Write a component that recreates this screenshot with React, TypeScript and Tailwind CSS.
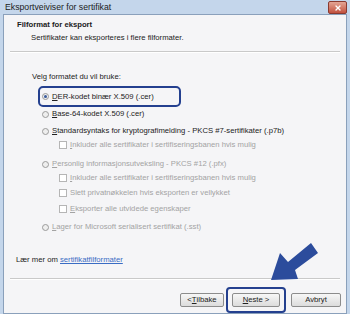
import { X } from 'lucide-react'

const font = { fontFamily: '"Liberation Sans", Arial, sans-serif' }

type OptProps = {
  label: string
  first: string
  disabled?: boolean
  checked?: boolean
}

const Radio = ({ label, first, disabled, checked }: OptProps) => (
  <div className={`flex h-[14px] items-center gap-[3px] ${disabled ? 'text-[#a3a3a3]' : 'text-[#222]'}`}>
    <span className="flex h-[7px] w-[7px] items-center justify-center rounded-full border border-[#9a9a9a] bg-[#eeeeee]">
      {checked && <span className="h-[3px] w-[3px] rounded-full bg-[#3a5a9a]" />}
    </span>
    <span>
      <span className="underline">{first}</span>
      {label}
    </span>
  </div>
)

const Check = ({ label, first }: OptProps) => (
  <div className="flex h-[14px] items-center gap-[3px] pl-[17px] text-[#a3a3a3]">
    <span className="h-[8px] w-[8px] border border-[#b5b5b5] bg-white" />
    <span>
      <span className="underline">{first}</span>
      {label}
    </span>
  </div>
)

const Btn = ({ children, w }: { children: React.ReactNode; w: string }) => (
  <div className={`flex h-[14px] ${w} items-center justify-center rounded-[2px] border border-[#8c8c8c] bg-gradient-to-b from-[#f7f7f7] to-[#dcdcdc] text-[#222]`}>
    {children}
  </div>
)

const App = () => {
  return (
    <div
      className="relative flex h-[314px] w-[350px] flex-col overflow-hidden bg-[#c4d6eb] text-[7.7px] leading-none"
      style={font}
    >
      {/* title bar */}
      <div className="flex h-[17px] items-center justify-between pl-[5px] pr-[3px]">
        <span className="text-[8.7px] text-[#1b1b1b]">Eksportveiviser for sertifikat</span>
        <span className="mt-[1px] flex h-[13px] w-[19px] items-center justify-center rounded-[2px] border border-[#8a3a30] bg-gradient-to-b from-[#e3a595] to-[#c2503e]">
          <X className="h-[8px] w-[8px] text-white" strokeWidth={4} />
        </span>
      </div>

      {/* body */}
      <div className="mx-[3px] mb-[3px] flex flex-1 flex-col border border-[#8aa0bb] bg-[#f5f5f7]">
        <div className="h-[36px] pl-[13px] pt-[6px]">
          <div className="font-bold text-[#1b1b1b]">Filformat for eksport</div>
          <div className="mt-[5px] pl-[14px] text-[#222]">Sertifikater kan eksporteres i flere filformater.</div>
        </div>
        <div className="mx-[6px] border-t border-[#c9c9c9] border-b-white border-b" />

        <div className="pl-[28px] pt-[17px] text-[#222]">
          <div className="flex h-[14px] items-center">Velg formatet du vil bruke:</div>
          <div className="mt-[2px] pl-[10px]">
            <div className="-ml-[4px] flex h-[21px] w-[143px] items-center rounded-[5px] border-2 border-[#24408f] pl-[2px]">
              <Radio first="D" label="ER-kodet binær X.509 (.cer)" checked />
            </div>
            <div className="mt-[0px]">
              <Radio first="B" label="ase-64-kodet X.509 (.cer)" />
            </div>
            <div className="mt-[3px]">
              <Radio first="S" label="tandardsyntaks for kryptografimelding - PKCS #7-sertifikater (.p7b)" />
            </div>
            <Check first="I" label="nkluder alle sertifikater i sertifiseringsbanen hvis mulig" />
            <div className="mt-[5px]">
              <Radio first="P" label="ersonlig informasjonsutveksling - PKCS #12 (.pfx)" disabled />
            </div>
            <Check first="I" label="nkluder alle sertifikater i sertifiseringsbanen hvis mulig" />
            <div className="mt-[1px]">
              <Check first="" label="Slett privatnøkkelen hvis eksporten er vellykket" />
            </div>
            <div className="mt-[2px]">
              <Check first="E" label="ksporter alle utvidede egenskaper" />
            </div>
            <div className="mt-[4px]">
              <Radio first="L" label="ager for Microsoft serialisert sertifikat (.sst)" disabled />
            </div>
          </div>
        </div>

        <div className="mt-[19px] flex h-[14px] items-center pl-[12px] text-[#222]">
          Lær mer om&nbsp;<span className="text-[#3a6cc4] underline">sertifikatfilformater</span>
        </div>

        <div className="mx-[6px] mt-[11px] border-t border-[#c9c9c9] border-b-white border-b" />

        <div className="flex flex-1 items-start justify-end pr-[5px] pt-[7px]">
          <div className="mt-[6px]">
            <Btn w="w-[44px]">&lt; <span className="underline">T</span>ilbake</Btn>
          </div>
          <div className="ml-[2px] rounded-[4px] border-2 border-[#24408f] p-[4px]">
            <Btn w="w-[48px]"><span className="underline">N</span>este &gt;</Btn>
          </div>
          <div className="ml-[5px] mt-[6px]">
            <Btn w="w-[50px]">Avbryt</Btn>
          </div>
        </div>
      </div>

      {/* pointer arrow */}
      <svg className="absolute left-0 top-0" width="350" height="314" viewBox="0 0 350 314">
        <polygon
          points="271,280 280,253 288,262 311,243 318,253 295,270 298,279"
          fill="#2c4c9c"
        />
      </svg>
    </div>
  )
}

export default App
